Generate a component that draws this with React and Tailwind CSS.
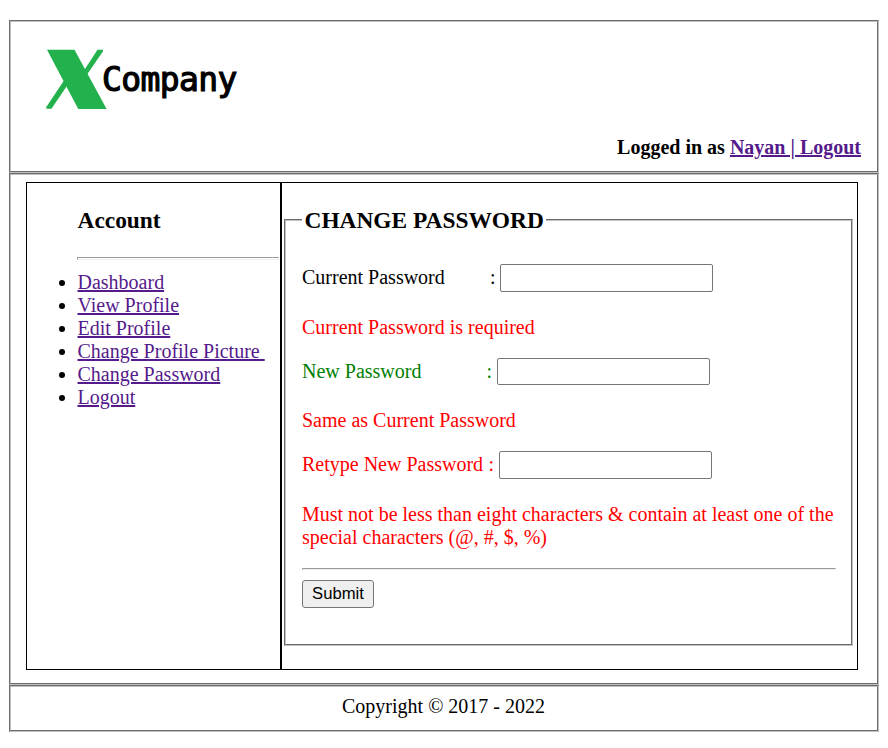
const groove = "border-2 border-[#c0c0c0] [border-style:groove]";
const links = ["Dashboard", "View Profile", "Edit Profile", "Change Profile Picture\u00a0", "Change Password", "Logout"];

function Logo() {
  return (
    <div className="flex h-[63px] items-start pt-px">
      <svg width="62" height="62" viewBox="0 0 62 62" className="shrink-0">
        <path d="M51.500 .7H57v1.600L41.300 25.300 38 21.500z" fill="#22b14c" />
        <path d="M18 31.500l3.200 5L5.500 59.800H.3V58z" fill="#22b14c" />
        <path d="M1 .8h27.500l32.100 59.200H32.300z" fill="#22b14c" />
      </svg>
      <span className="-ml-[6px] mt-[11px] whitespace-pre font-['DejaVu_Sans_Mono',monospace] text-[33px] leading-[40px] tracking-[-0.6px] text-black [-webkit-text-stroke:1.2px_black]">
        Company
      </span>
    </div>
  );
}

function Field({ label, gap, color, box }) {
  return (
    <div className={`flex ${color}`}>
      <span className={`mt-[2px] h-[23px] whitespace-nowrap ${gap}`}>{label}</span>
      <span className="mt-[2px]">:</span>
      <input type="password" className={`w-[213px] rounded-[2px] border border-[#767676] bg-white ${box}`} />
    </div>
  );
}

export default function App() {
  return (
    <div className="h-[748px] w-[888px] bg-white pl-[9px] pt-[20px] font-['Liberation_Serif',serif] text-[20px] leading-[23px] text-black">
      <div className="w-[870px]">
        <header className={`${groove} flex h-[153px] flex-col pl-[35px] pr-[16px] pt-[26px]`}>
          <Logo />
          <p className="mt-[25px] text-right font-bold">
            Logged in as <a className="text-[#551a8b] underline decoration-2" href="#">Nayan | Logout</a>
          </p>
        </header>
        <main className={`${groove} h-[512px] pl-[15px] pt-[7px]`}>
          <div className="flex h-[488px] w-[832px]">
            <nav className="w-[255px] border border-black pl-[50px] pr-px">
              <h3 className="mt-[24px] pl-[0.5px] text-[23.4px] font-bold leading-[27px]">Account</h3>
              <hr className="mt-[23px] h-[3px] border border-[#eeeeee] border-l-[#9a9a9a] border-t-[#9a9a9a]" />
              <ul className="mt-[11px] list-disc pl-[0.5px]">
                {links.map((l) => (
                  <li key={l}><a className="text-[#551a8b] underline decoration-2" href="#">{l}</a></li>
                ))}
              </ul>
            </nav>
            <section className="w-[577px] border border-black pl-[2px] pt-[24px]">
              <fieldset className={`${groove} h-[439px] w-[569px] pl-[16px] pr-[15px]`}>
                <legend className="h-[26px] px-[2.5px] text-[23.4px] font-bold leading-[27px]">CHANGE PASSWORD</legend>
                <div className="mt-[31px]">
                  <Field label="Current Password" gap="w-[188px]" color="text-black" box="ml-[4px] h-[28px]" />
                  <p className="mt-[24px] text-[#ff0000]">Current Password is required</p>
                </div>
                <div className="mt-[19px]">
                  <Field label="New Password" gap="w-[184.5px]" color="text-[#008000]" box="ml-[4.5px] h-[27px]" />
                  <p className="mt-[24px] text-[#ff0000]">Same as Current Password</p>
                </div>
                <div className="mt-[19px]">
                  <Field label="Retype New Password" gap="w-[186.5px]" color="text-[#ff0000]" box="ml-[4.5px] h-[28px]" />
                  <p className="mt-[24px] text-[#ff0000]">Must not be less than eight characters &amp; contain at least one of the special characters (@, #, $, %)</p>
                </div>
                <hr className="mt-[19px] h-[2px] border border-[#eeeeee] border-l-[#9a9a9a] border-t-[#9a9a9a]" />
                <button className="mt-[10px] block h-[28px] w-[72px] rounded-[3px] border border-[#767676] bg-[#efefef] font-['Liberation_Sans',sans-serif] text-[16.67px] leading-[24px]">Submit</button>
              </fieldset>
            </section>
          </div>
        </main>
        <footer className={`${groove} h-[47px] pt-[8px] text-center`}>
          <span className="-ml-px">Copyright © 2017 - 2022</span>
        </footer>
      </div>
    </div>
  );
}
